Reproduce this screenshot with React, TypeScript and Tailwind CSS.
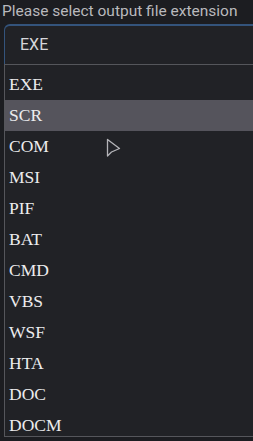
const options = ["EXE", "SCR", "COM", "MSI", "PIF", "BAT", "CMD", "VBS", "WSF", "HTA", "DOC", "DOCM"]

const Cursor = () => (
  <svg className="absolute left-[106px] top-[138px]" width="16" height="22" viewBox="0 0 16 22">
    <path d="M1.5 1.5 L1.5 18 L5.5 14 L13.5 10.5 Z" fill="#222328" stroke="#b4b4b8" strokeWidth="1.3" strokeLinejoin="round" />
  </svg>
)

const App = () => {
  return (
    <div className="relative w-[253px] h-[441px] overflow-hidden bg-[#1c1d21]">
      {/* Label */}
      <p className="pl-[2px] pt-[2px] h-[24px] text-[15.5px] leading-[18px] text-[#b9b9bd] font-['Roboto',sans-serif] whitespace-nowrap">
        Please select output file extension
      </p>

      {/* Select box */}
      <div className="ml-[4px] w-[280px] h-[40px] flex items-center pl-[15px] rounded-t-[6px] border-t-2 border-l border-[#34547c] bg-[#212226]">
        <span className="text-[16px] text-[#d6d6da] font-['Roboto',sans-serif]">EXE</span>
      </div>

      {/* Options list */}
      <div className="ml-[4px] w-[280px] h-[373px] overflow-hidden border-t border-l border-b border-[#55565b] bg-[#212226] pt-[4px]">
        {options.map((opt, idx) => (
          <div
            key={opt}
            className={`h-[31px] flex items-center pl-[4px] text-[17.5px] font-['Liberation_Serif',serif] text-[#ececee] ${
              idx === 1 ? "bg-[#55545c]" : ""
            }`}
          >
            {opt}
          </div>
        ))}
      </div>

      <Cursor />
    </div>
  )
}

export default App
